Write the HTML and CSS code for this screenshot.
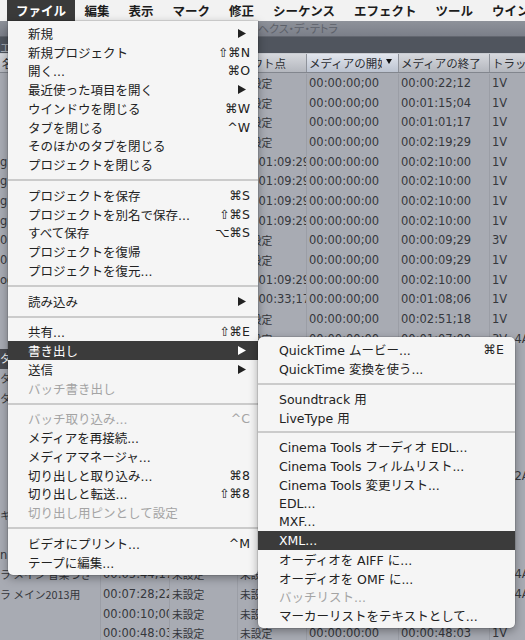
FILE: index.html
```html
<!DOCTYPE html>
<html lang="ja">
<head>
<meta charset="utf-8">
<title>ファイル メニュー</title>
<link rel="stylesheet" href="styles.css">
</head>
<body>
<div class="screen">
  <div class="menubar">
    <span class="mb-item is-open">ファイル</span>
    <span class="mb-item">編集</span>
    <span class="mb-item">表示</span>
    <span class="mb-item">マーク</span>
    <span class="mb-item">修正</span>
    <span class="mb-item">シーケンス</span>
    <span class="mb-item">エフェクト</span>
    <span class="mb-item">ツール</span>
    <span class="mb-item">ウインドウ</span>
  </div>

  <div class="window">
    <div class="titlebar">ヘクス・デ・テトラ</div>
    <div class="tabbar"><span class="tab">エフェクト</span></div>
    <div class="thead">
      <div class="th">名前</div>
      <div class="th">継続時間</div>
      <div class="th">イン点</div>
      <div class="th">アウト点</div>
      <div class="th th-sorted"><span class="th-label">メディアの開始</span><svg class="sort" viewBox="0 0 6 5"><path d="M0 0H6L3 5Z"/></svg></div>
      <div class="th">メディアの終了</div>
      <div class="th">トラック</div>
    </div>
    <div class="tbody">
      <div class="row"><div class="td"></div><div class="td"></div><div class="td"></div><div class="td ja">未設定</div><div class="td">00:00:00;00</div><div class="td">00:00:22;12</div><div class="td">1V</div></div>
      <div class="row"><div class="td"></div><div class="td"></div><div class="td"></div><div class="td ja">未設定</div><div class="td">00:00:00;00</div><div class="td">00:01:15;04</div><div class="td">1V</div></div>
      <div class="row"><div class="td"></div><div class="td"></div><div class="td"></div><div class="td ja">未設定</div><div class="td">00:00:00;00</div><div class="td">00:01:01;17</div><div class="td">1V</div></div>
      <div class="row"><div class="td"></div><div class="td"></div><div class="td"></div><div class="td ja">未設定</div><div class="td">00:00:00;00</div><div class="td">00:02:19;29</div><div class="td">1V</div></div>
      <div class="row"><div class="td">g</div><div class="td"></div><div class="td"></div><div class="td">00:01:09:29</div><div class="td">00:00:00:00</div><div class="td">00:02:10:00</div><div class="td">1V</div></div>
      <div class="row"><div class="td">g</div><div class="td"></div><div class="td"></div><div class="td">00:01:09:29</div><div class="td">00:00:00:00</div><div class="td">00:02:10:00</div><div class="td">1V</div></div>
      <div class="row"><div class="td">g</div><div class="td"></div><div class="td"></div><div class="td">00:01:09:29</div><div class="td">00:00:00:00</div><div class="td">00:02:10:00</div><div class="td">1V</div></div>
      <div class="row"><div class="td">g</div><div class="td"></div><div class="td"></div><div class="td">00:01:09:29</div><div class="td">00:00:00:00</div><div class="td">00:02:10:00</div><div class="td">1V</div></div>
      <div class="row"><div class="td">0</div><div class="td"></div><div class="td"></div><div class="td ja">未設定</div><div class="td">00:00:00;00</div><div class="td">00:00:09;29</div><div class="td">3V</div></div>
      <div class="row"><div class="td">0</div><div class="td"></div><div class="td"></div><div class="td ja">未設定</div><div class="td">00:00:00;00</div><div class="td">00:00:09;29</div><div class="td">1V</div></div>
      <div class="row"><div class="td">og</div><div class="td"></div><div class="td"></div><div class="td">00:01:09:29</div><div class="td">00:00:00:00</div><div class="td">00:02:10:00</div><div class="td">1V</div></div>
      <div class="row"><div class="td"></div><div class="td"></div><div class="td"></div><div class="td">00:00:33;17</div><div class="td">00:00:00;00</div><div class="td">00:01:08;06</div><div class="td">1V</div></div>
      <div class="row"><div class="td"></div><div class="td"></div><div class="td"></div><div class="td ja">未設定</div><div class="td">00:00:00;00</div><div class="td">00:02:51;18</div><div class="td">1V</div></div>
      <div class="row"><div class="td"></div><div class="td"></div><div class="td"></div><div class="td ja">未設定</div><div class="td">00:00:00;00</div><div class="td">00:01:07;00</div><div class="td">3V, 4A</div></div>
      <div class="row is-selected"><div class="td ja">タ</div><div class="td"></div><div class="td"></div><div class="td"></div><div class="td"></div><div class="td"></div><div class="td"></div></div>
      <div class="row"><div class="td ja">タ</div><div class="td"></div><div class="td"></div><div class="td"></div><div class="td"></div><div class="td"></div><div class="td"></div></div>
      <div class="row"><div class="td ja">タ</div><div class="td"></div><div class="td"></div><div class="td"></div><div class="td"></div><div class="td"></div><div class="td"></div></div>
      <div class="row"><div class="td"></div><div class="td"></div><div class="td"></div><div class="td"></div><div class="td"></div><div class="td"></div><div class="td"></div></div>
      <div class="row"><div class="td"></div><div class="td"></div><div class="td"></div><div class="td"></div><div class="td"></div><div class="td"></div><div class="td"></div></div>
      <div class="row"><div class="td"></div><div class="td"></div><div class="td"></div><div class="td"></div><div class="td"></div><div class="td"></div><div class="td"></div></div>
      <div class="row"><div class="td"></div><div class="td"></div><div class="td"></div><div class="td"></div><div class="td"></div><div class="td"></div><div class="td">1V, 2A</div></div>
      <div class="row"><div class="td"></div><div class="td"></div><div class="td"></div><div class="td"></div><div class="td"></div><div class="td"></div><div class="td"></div></div>
      <div class="row"><div class="td ja">キ</div><div class="td"></div><div class="td"></div><div class="td"></div><div class="td"></div><div class="td"></div><div class="td"></div></div>
      <div class="row"><div class="td"></div><div class="td"></div><div class="td"></div><div class="td"></div><div class="td"></div><div class="td"></div><div class="td"></div></div>
      <div class="row"><div class="td">n</div><div class="td"></div><div class="td"></div><div class="td"></div><div class="td"></div><div class="td"></div><div class="td"></div></div>
      <div class="row"><div class="td ja">ラ メイン 音楽つき</div><div class="td">00:05:44;17</div><div class="td ja">未設定</div><div class="td ja">未設定</div><div class="td"></div><div class="td"></div><div class="td">1V, 4A</div></div>
      <div class="row"><div class="td ja">ラ メイン2013用</div><div class="td">00:07:28;22</div><div class="td ja">未設定</div><div class="td ja">未設定</div><div class="td"></div><div class="td"></div><div class="td">1V, 4A</div></div>
      <div class="row"><div class="td"></div><div class="td">00:00:10;00</div><div class="td ja">未設定</div><div class="td ja">未設定</div><div class="td"></div><div class="td"></div><div class="td"></div></div>
      <div class="row"><div class="td"></div><div class="td">00:00:48:03</div><div class="td ja">未設定</div><div class="td ja">未設定</div><div class="td">00:00:00:00</div><div class="td">00:00:48:03</div><div class="td">1V</div></div>
    </div>
  </div>

  <div class="menu file-menu">
    <div class="mi"><span class="label">新規</span><svg class="arrow" viewBox="0 0 8 9"><path d="M0 0L8 4.5L0 9Z"/></svg></div>
    <div class="mi"><span class="label">新規プロジェクト</span><span class="key">⇧⌘N</span></div>
    <div class="mi"><span class="label">開く...</span><span class="key">⌘O</span></div>
    <div class="mi"><span class="label">最近使った項目を開く</span><svg class="arrow" viewBox="0 0 8 9"><path d="M0 0L8 4.5L0 9Z"/></svg></div>
    <div class="mi"><span class="label">ウインドウを閉じる</span><span class="key">⌘W</span></div>
    <div class="mi"><span class="label">タブを閉じる</span><span class="key">^W</span></div>
    <div class="mi"><span class="label">そのほかのタブを閉じる</span></div>
    <div class="mi"><span class="label">プロジェクトを閉じる</span></div>
    <div class="sep"></div>
    <div class="mi"><span class="label">プロジェクトを保存</span><span class="key">⌘S</span></div>
    <div class="mi"><span class="label">プロジェクトを別名で保存...</span><span class="key">⇧⌘S</span></div>
    <div class="mi"><span class="label">すべて保存</span><span class="key">⌥⌘S</span></div>
    <div class="mi"><span class="label">プロジェクトを復帰</span></div>
    <div class="mi"><span class="label">プロジェクトを復元...</span></div>
    <div class="sep"></div>
    <div class="mi"><span class="label">読み込み</span><svg class="arrow" viewBox="0 0 8 9"><path d="M0 0L8 4.5L0 9Z"/></svg></div>
    <div class="sep"></div>
    <div class="mi"><span class="label">共有...</span><span class="key">⇧⌘E</span></div>
    <div class="mi hl"><span class="label">書き出し</span><svg class="arrow" viewBox="0 0 8 9"><path d="M0 0L8 4.5L0 9Z"/></svg></div>
    <div class="mi"><span class="label">送信</span><svg class="arrow" viewBox="0 0 8 9"><path d="M0 0L8 4.5L0 9Z"/></svg></div>
    <div class="mi off"><span class="label">バッチ書き出し</span></div>
    <div class="sep"></div>
    <div class="mi off"><span class="label">バッチ取り込み...</span><span class="key">^C</span></div>
    <div class="mi"><span class="label">メディアを再接続...</span></div>
    <div class="mi"><span class="label">メディアマネージャ...</span></div>
    <div class="mi"><span class="label">切り出しと取り込み...</span><span class="key">⌘8</span></div>
    <div class="mi"><span class="label">切り出しと転送...</span><span class="key">⇧⌘8</span></div>
    <div class="mi off"><span class="label">切り出し用ピンとして設定</span></div>
    <div class="sep"></div>
    <div class="mi"><span class="label">ビデオにプリント...</span><span class="key">^M</span></div>
    <div class="mi"><span class="label">テープに編集...</span></div>
  </div>

  <div class="menu submenu">
    <div class="mi"><span class="label">QuickTime ムービー...</span><span class="key">⌘E</span></div>
    <div class="mi"><span class="label">QuickTime 変換を使う...</span></div>
    <div class="sep"></div>
    <div class="mi"><span class="label">Soundtrack 用</span></div>
    <div class="mi"><span class="label">LiveType 用</span></div>
    <div class="sep"></div>
    <div class="mi"><span class="label">Cinema Tools オーディオ EDL...</span></div>
    <div class="mi"><span class="label">Cinema Tools フィルムリスト...</span></div>
    <div class="mi"><span class="label">Cinema Tools 変更リスト...</span></div>
    <div class="mi"><span class="label">EDL...</span></div>
    <div class="mi"><span class="label">MXF...</span></div>
    <div class="mi hl"><span class="label">XML...</span></div>
    <div class="mi"><span class="label">オーディオを AIFF に...</span></div>
    <div class="mi"><span class="label">オーディオを OMF に...</span></div>
    <div class="mi off"><span class="label">バッチリスト...</span></div>
    <div class="mi"><span class="label">マーカーリストをテキストとして...</span></div>
  </div>
</div>
</body>
</html>
```

FILE: styles.css
```css
* { box-sizing: border-box; }

body {
  margin: 0;
  background: #a8abb3;
}

.screen {
  position: relative;
  width: 525px;
  height: 640px;
  overflow: hidden;
  font-family: "DejaVu Sans", "Noto Sans CJK JP", sans-serif;
}

/* ---------- menu bar ---------- */
.menubar {
  display: flex;
  height: 21px;
  padding-left: 7px;
  background: #f2f2f2;
  font-family: "Noto Sans CJK JP", sans-serif;
  font-weight: 700;
  font-size: 12.5px;
  color: #1c1c1c;
  white-space: nowrap;
}
.mb-item {
  padding: 0 9.5px;
  line-height: 21px;
}
.mb-item.is-open {
  background: #3a3a3a;
  color: #fff;
  padding: 0 9px;
}

/* ---------- background window ---------- */
.window {
  height: 619px;
  display: flex;
  flex-direction: column;
  overflow: hidden;
}
.titlebar {
  flex: none;
  height: 15px;
  padding-left: 258px;
  background: linear-gradient(#8e929a, #7b7f89);
  font-family: "Noto Sans CJK JP", sans-serif;
  font-size: 11px;
  line-height: 15px;
  color: #5d616a;
  font-feature-settings: "palt";
  white-space: nowrap;
}
.tabbar {
  flex: none;
  height: 17px;
  background: #50555e;
  border-top: 1px solid #62666f;
}
.tab {
  font-family: "Noto Sans CJK JP", sans-serif;
  font-size: 11px;
  line-height: 16px;
  color: #a9adb5;
}

.thead,
.row {
  display: grid;
  grid-template-columns: 100px 69px 68px 69px 92px 91px 120px;
  width: 525px;
}
.thead {
  flex: none;
  height: 20px;
  background: linear-gradient(#d6d8dd, #b4b7be);
  border-top: 1px solid #c9ccd2;
  border-bottom: 1px solid #82868e;
}
.th {
  display: flex;
  align-items: center;
  padding-left: 2px;
  border-left: 1px solid #8f939b;
  font-family: "Noto Sans CJK JP", sans-serif;
  font-size: 11.5px;
  color: #2c2e33;
  white-space: nowrap;
  overflow: hidden;
}
.th:first-child { border-left: none; }
.th-sorted {
  background: linear-gradient(#e2e6ee, #bcc3d0);
}
.th-label {
  flex: 1;
  overflow: hidden;
}
.sort {
  flex: none;
  width: 6px;
  height: 5px;
  margin: 0 6px 3px 4px;
  fill: #111;
}

.tbody {
  flex: 1;
  padding-top: 1px;
  background: #a8abb3;
}
.row { height: 19.67px; }
.td {
  padding-left: 2px;
  border-left: 1px solid #9b9ea6;
  font-size: 11.5px;
  line-height: 19.67px;
  color: #35373c;
  white-space: nowrap;
  overflow: hidden;
}
.row .td:first-child {
  border-left: none;
  padding-left: 0;
}
.td.ja {
  font-family: "Noto Sans CJK JP", sans-serif;
  font-size: 10.8px;
}
.row.is-selected .td:first-child {
  background: #494b51;
  color: #fff;
}

/* ---------- menus ---------- */
.menu {
  position: absolute;
  background: #f5f5f5;
  font-size: 12.5px;
  color: #222;
  box-shadow: 0 3px 10px rgba(0, 0, 0, 0.35), 0 0 0 0.5px rgba(0, 0, 0, 0.2);
}
.file-menu {
  left: 8px;
  top: 21px;
  width: 250px;
  padding: 3px 0;
  border-radius: 0 0 5px 5px;
}
.submenu {
  left: 258px;
  top: 337px;
  width: 257px;
  padding: 3.5px 0 2.5px;
  border-radius: 5px;
}
.mi {
  display: flex;
  align-items: center;
  height: 18.75px;
  padding: 0 8px 0 20px;
  white-space: nowrap;
}
.submenu .mi { padding: 0 11px 0 21px; }
.label { flex: 1; }
.key { font-family: "DejaVu Sans", sans-serif; }
.arrow {
  width: 8px;
  height: 9px;
  margin-right: 4px;
  fill: currentColor;
}
.mi.hl {
  background: #3b3b3b;
  color: #fff;
}
.mi.off { color: #a4a4a4; }

.sep {
  display: flex;
  align-items: center;
  height: 12px;
}
.submenu .sep { height: 11px; }
.sep::before {
  content: "";
  flex: 1;
  height: 2px;
  background: #cbcbcb;
}
```
